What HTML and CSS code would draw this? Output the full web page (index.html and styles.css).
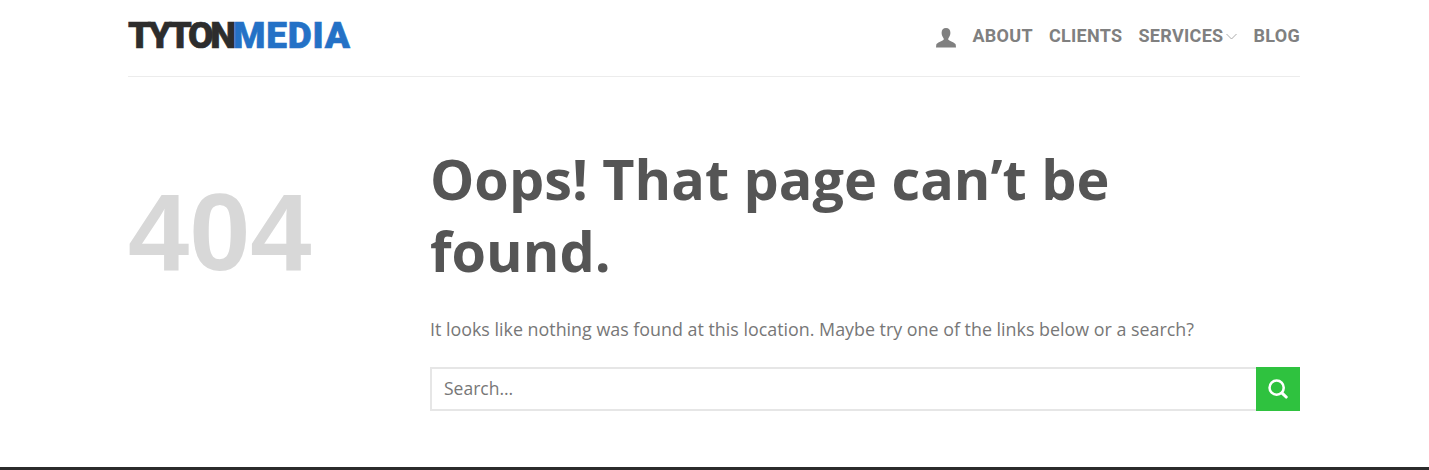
FILE: index.html
```html
<!DOCTYPE html>
<html lang="en">
<head>
    <meta charset="UTF-8">
    <title>Page not found - Tyton Media</title>
    <link rel="stylesheet" href="styles.css">
</head>
<body>
    <header class="header">
        <a class="logo" href="#">TYTON<span class="logo-blue">MEDIA</span></a>
        <nav class="nav">
            <a class="nav-user" href="#">
                <svg width="20" height="20" viewBox="0 0 20 20">
                    <path fill="#808080" d="M10 0C7.200 0 5.600 2 5.600 4.800c0 2 .7 3.900 1.800 5.100.5.600.5 1.700-.1 2.200C5.600 13.500 1.200 14.600.3 16.600L0 19.400h20l-.3-2.800c-.9-2-5.300-3.100-7-4.500-.6-.5-.6-1.600-.1-2.200 1.100-1.200 1.800-3.100 1.800-5.100C14.400 2 12.800 0 10 0z"/>
                </svg>
            </a>
            <a class="nav-link" href="#">About</a>
            <a class="nav-link" href="#">Clients</a>
            <a class="nav-link" href="#">Services<svg class="nav-caret" width="11" height="7" viewBox="0 0 11 7">
                    <path fill="none" stroke="#aaa" stroke-width="1" d="M.5 1 5.500 6l5-5"/>
                </svg></a>
            <a class="nav-link" href="#">Blog</a>
        </nav>
    </header>

    <main class="main">
        <div class="code">404</div>
        <div class="content">
            <h1 class="title">Oops! That page can’t be found.</h1>
            <p class="text">It looks like nothing was found at this location. Maybe try one of the links below or a search?</p>
            <form class="search">
                <input class="search-input" type="text" placeholder="Search…">
                <button class="search-button" type="button" aria-label="Search">
                    <svg width="20" height="20" viewBox="0 0 22 22">
                        <circle cx="9.500" cy="9.500" r="7.800" fill="none" stroke="#fff" stroke-width="2.800"/>
                        <path d="M15.500 15.500l4.500 4.300" fill="none" stroke="#fff" stroke-width="3.400" stroke-linecap="round"/>
                    </svg>
                </button>
            </form>
        </div>
    </main>

    <div class="footer-bar"></div>
</body>
</html>
```

FILE: styles.css
```css
* {
    box-sizing: border-box;
}

html, body {
    height: 100%;
}

body {
    margin: 0;
    display: flex;
    flex-direction: column;
    font-family: "Open Sans", sans-serif;
    background: #fff;
    overflow: hidden;
}

a {
    text-decoration: none;
}

.header {
    display: flex;
    align-items: center;
    justify-content: space-between;
    width: 1172px;
    height: 77px;
    margin-left: 128px;
    padding-bottom: 6px;
    border-bottom: 1px solid #ececec;
}

.logo {
    font-family: "Roboto", sans-serif;
    font-size: 37px;
    font-weight: 900;
    letter-spacing: -3.300px;
    color: #2d2d2d;
    -webkit-text-stroke: .6px #2d2d2d;
}

.logo-blue {
    color: #2471c6;
    letter-spacing: .8px;
    -webkit-text-stroke: .6px #2471c6;
}

.nav {
    display: flex;
    align-items: center;
    gap: 16px;
}

.nav-user {
    display: flex;
    padding-top: 5px;
}

.nav-link {
    font-family: "Roboto", sans-serif;
    font-size: 18px;
    font-weight: 700;
    letter-spacing: .3px;
    text-transform: uppercase;
    color: #808080;
}

.nav-caret {
    margin-left: 3px;
    vertical-align: 2px;
}

.main {
    flex: 1;
    display: flex;
    width: 1172px;
    margin-left: 128px;
    padding-top: 65px;
}

.code {
    width: 302px;
    padding-top: 25px;
    font-family: "Liberation Sans", sans-serif;
    font-size: 110px;
    font-weight: 700;
    line-height: 130px;
    color: #d8d8d8;
}

.content {
    flex: 1;
}

.title {
    margin: 0;
    font-size: 55.750px;
    font-weight: 700;
    line-height: 72px;
    color: #555;
}

.text {
    margin: 28px 0 0;
    font-size: 17.880px;
    line-height: 30px;
    color: #777;
}

.search {
    display: flex;
    height: 44px;
    margin-top: 23px;
}

.search-input {
    flex: 1;
    padding: 0 12px 2px;
    border: 2px solid #e6e6e6;
    border-right: 0;
    font-family: inherit;
    font-size: 17.500px;
    color: #777;
    outline: 0;
}

.search-input::placeholder {
    color: #777;
    opacity: 1;
}

.search-button {
    display: flex;
    align-items: center;
    justify-content: center;
    width: 44px;
    padding: 0;
    border: 0;
    background: #2fc23f;
}

.footer-bar {
    height: 3px;
    background: #2b2b2b;
}
```
